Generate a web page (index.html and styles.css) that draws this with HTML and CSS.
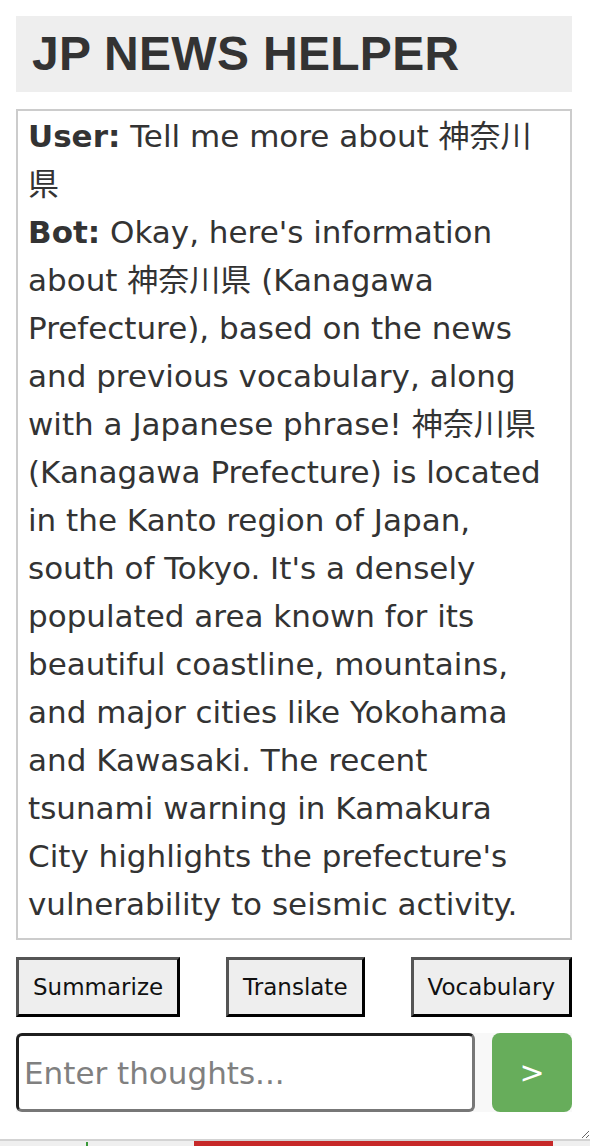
FILE: index.html
```html
<!DOCTYPE html>
<html lang="en">
<head>
<meta charset="utf-8">
<title>JP News Helper</title>
<link rel="stylesheet" href="styles.css">
</head>
<body>
<div class="app">
  <header class="title-bar"><h1 class="title">JP NEWS HELPER</h1></header>
  <div class="chat">
    <p class="msg"><b class="who">User:</b> Tell me more about 神奈川県</p>
    <p class="msg"><b class="who">Bot:</b> Okay, here's information about 神奈川県 (Kanagawa Prefecture), based on the news and previous vocabulary, along with a Japanese phrase! 神奈川県 (Kanagawa Prefecture) is located in the Kanto region of Japan, south of Tokyo. It's a densely populated area known for its beautiful coastline, mountains, and major cities like Yokohama and Kawasaki. The recent tsunami warning in Kamakura City highlights the prefecture's vulnerability to seismic activity. Here's a helpful phrase to remember when visiting the area.</p>
  </div>
  <div class="actions">
    <button class="action" type="button">Summarize</button>
    <button class="action" type="button">Translate</button>
    <button class="action" type="button">Vocabulary</button>
  </div>
  <form class="composer">
    <input class="composer-input" type="text" placeholder="Enter thoughts...">
    <button class="send" type="button">&gt;</button>
  </form>
</div>
<div class="backdrop">
  <div class="bd-left"><span class="bd-tick"></span></div>
  <div class="bd-red"><span class="bd-red-text">JAPAN NEWS</span></div>
  <div class="bd-right"></div>
</div>
</body>
</html>
```
FILE: styles.css
```css
html, body {
  margin: 0;
  padding: 0;
  background: #fff;
}

.app {
  box-sizing: border-box;
  height: 1141px;
  padding: 16px 18px 0 16px;
  border-bottom: 2px solid #d3d3d3;
  resize: both;
  overflow: hidden;
  display: flex;
  flex-direction: column;
}

.title-bar {
  height: 76px;
  flex: none;
  background: #eeeeee;
  padding: 0 16px;
  display: flex;
  align-items: center;
}

.title {
  margin: 0;
  font-family: "Liberation Sans", Arial, sans-serif;
  font-weight: bold;
  font-size: 48px;
  line-height: 1;
  letter-spacing: 0.3px;
  color: #333;
}

.chat {
  box-sizing: border-box;
  margin-top: 17px;
  height: 831px;
  flex: none;
  border: 2px solid #cccccc;
  padding: 1px 10px 0;
  overflow-y: auto;
  scrollbar-width: none;
  font-family: "DejaVu Sans", "Noto Sans CJK JP", sans-serif;
  font-size: 31px;
  line-height: 48px;
  color: #333;
}

.msg {
  margin: 0;
}

.who {
  font-weight: bold;
}

.actions {
  margin-top: 17px;
  display: flex;
  justify-content: space-between;
}

.action {
  box-sizing: border-box;
  height: 60px;
  padding: 0 14px;
  font-family: "DejaVu Sans", sans-serif;
  font-size: 23px;
  color: #111;
  background: #eeeeee;
  border: 3px solid;
  border-color: #555 #000 #000 #555;
  border-radius: 0;
}

.composer {
  margin: 16px 0 0;
  display: flex;
  gap: 17px;
  height: 79px;
  background: #f8f8f8;
}

.composer-input {
  flex: 1;
  min-width: 0;
  box-sizing: border-box;
  height: 79px;
  margin: 0;
  border: 3px solid;
  border-color: #1f1f1f #777 #777 #1f1f1f;
  border-radius: 6px;
  padding: 0 5px;
  background: #fff;
  font-family: "DejaVu Sans", sans-serif;
  font-size: 31px;
  color: #333;
  outline: none;
}

.composer-input::placeholder {
  color: #808080;
}

.send {
  width: 80px;
  height: 79px;
  flex: none;
  border: none;
  border-radius: 8px;
  background: #67ad5b;
  color: #fff;
  font-family: "DejaVu Sans", sans-serif;
  font-size: 30px;
  padding: 0;
}

.backdrop {
  height: 5px;
  display: flex;
  overflow: hidden;
  background: #efefef;
}

.bd-left {
  width: 194px;
  flex: none;
  position: relative;
}

.bd-tick {
  position: absolute;
  left: 86px;
  top: 1px;
  width: 2px;
  height: 4px;
  background: #3a9a3a;
}

.bd-red {
  width: 359px;
  flex: none;
  background: #c62828;
  display: flex;
  justify-content: center;
}

.bd-red-text {
  font-family: "Liberation Sans", sans-serif;
  font-weight: bold;
  font-size: 30px;
  line-height: 1;
  color: #fff;
  letter-spacing: 6px;
  margin-top: 2px;
}

.bd-right {
  flex: 1;
}
```
